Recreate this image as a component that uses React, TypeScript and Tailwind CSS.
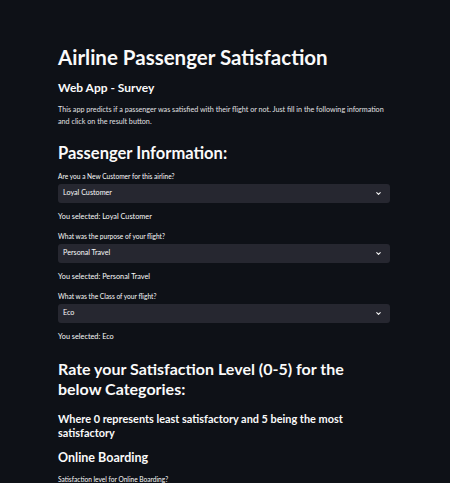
import { ChevronDown } from "lucide-react";

const questions = [
  { label: "Are you a New Customer for this airline?", value: "Loyal Customer" },
  { label: "What was the purpose of your flight?", value: "Personal Travel" },
  { label: "What was the Class of your flight?", value: "Eco" },
];

function SelectBox({ label, value }: { label: string; value: string }) {
  return (
    <div className="flex flex-col">
      <p className="text-[6.6px] leading-[8px] text-[#fafafa]">{label}</p>
      <div className="mt-[4px] h-[19px] w-[332px] rounded-[3px] bg-[#262730] flex items-center justify-between pl-[5px] pr-[8px]">
        <span className="text-[7.2px] text-[#fafafa]">{value}</span>
        <ChevronDown className="w-[7px] h-[7px] text-[#fafafa]" strokeWidth={3.5} />
      </div>
      <p className="mt-[9px] text-[7.3px] leading-[10px] text-[#fafafa]">You selected: {value}</p>
    </div>
  );
}

export default function App() {
  return (
    <div
      className="w-[450px] h-[483px] overflow-hidden bg-[#0e1117] text-[#fafafa]"
      style={{ fontFamily: "Lato, 'Noto Sans', sans-serif" }}
    >
      <div className="pl-[58px] pt-[44px] flex flex-col">
        <h1 className="text-[20.5px] leading-[26px] font-bold">Airline Passenger Satisfaction</h1>
        <h3 className="mt-[10px] text-[12px] leading-[16px] font-bold">Web App - Survey</h3>
        <p className="mt-[8px] w-[335px] text-[7.2px] leading-[12px] text-[#e0e0e2]">
          This app predicts if a passenger was satisfied with their flight or not. Just fill in the following information and click on the result button.
        </p>
        <h2 className="mt-[14px] text-[16.5px] leading-[22px] font-bold">Passenger Information:</h2>

        <div className="mt-[8px] flex flex-col gap-[10px]">
          {questions.map((q) => (
            <SelectBox key={q.label} label={q.label} value={q.value} />
          ))}
        </div>

        <h2 className="mt-[17px] w-[310px] text-[16px] leading-[20px] font-bold">
          Rate your Satisfaction Level (0-5) for the below Categories:
        </h2>
        <h4 className="mt-[13px] w-[300px] text-[10.9px] leading-[14px] font-bold">
          Where 0 represents least satisfactory and 5 being the most satisfactory
        </h4>
        <h3 className="mt-[10px] text-[12.5px] leading-[16px] font-bold">Online Boarding</h3>
        <p className="mt-[9px] text-[6.6px] leading-[8px]">Satisfaction level for Online Boarding?</p>
      </div>
    </div>
  );
}
